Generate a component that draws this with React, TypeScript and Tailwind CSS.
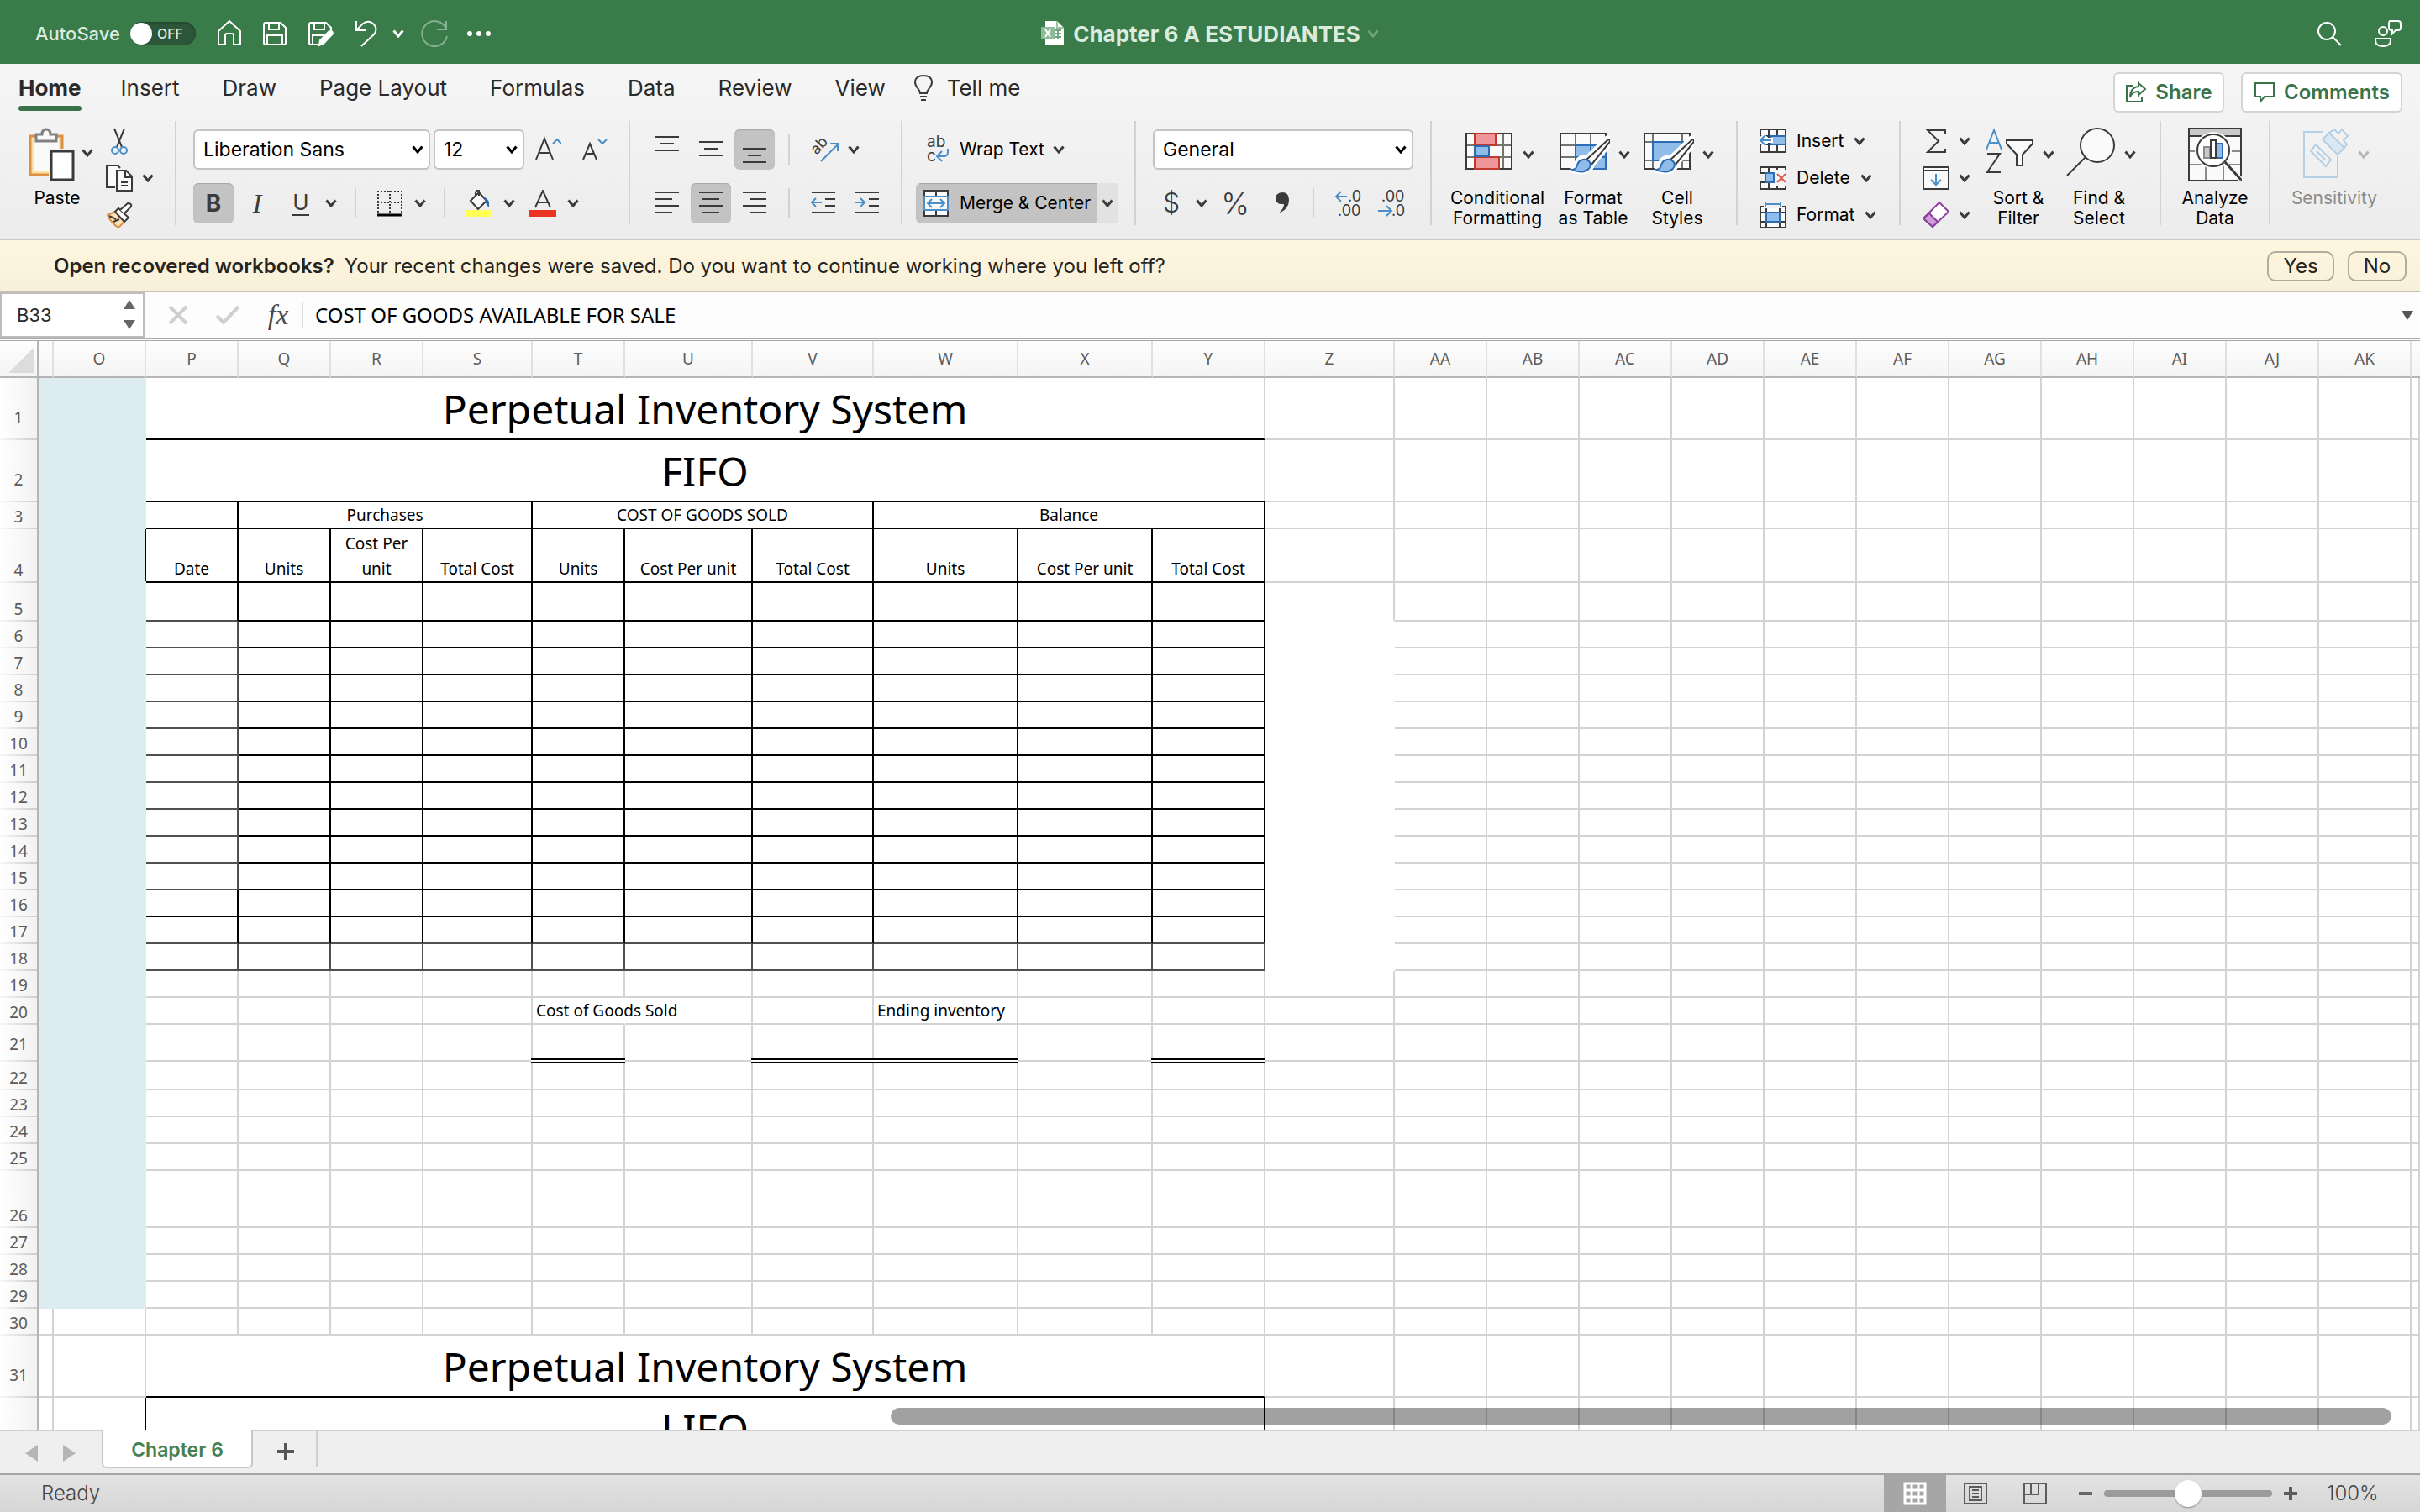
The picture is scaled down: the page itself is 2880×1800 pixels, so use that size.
import type { ReactNode } from 'react';
import clsx from 'clsx';

const ink = '#3b3b3b';
const blue = '#4a8fc9';

type IconProps = {
  children: ReactNode;
  w?: number;
  h?: number;
  className?: string;
};

function Icon({ children, w = 32, h = 32, className }: IconProps) {
  return (
    <svg
      width={w}
      height={h}
      viewBox={`0 0 ${w} ${h}`}
      fill="none"
      stroke={ink}
      strokeWidth={2}
      className={clsx('shrink-0', className)}
      aria-hidden="true"
    >
      {children}
    </svg>
  );
}

function Chevron({ className }: { className?: string }) {
  return (
    <svg width="14" height="10" viewBox="0 0 14 10" fill="none" stroke="currentColor" strokeWidth="3" className={clsx('shrink-0', className)} aria-hidden="true">
      <path d="M1.500 1.500 7 8l5.500-6.500" />
    </svg>
  );
}

function Caret({ label, className }: { label: string; className?: string }) {
  return (
    <button aria-label={label} className={clsx('flex h-12 w-6 shrink-0 items-center justify-center text-[#3b3b3b]', className)}>
      <Chevron />
    </button>
  );
}

function Tool({ label, children, active, className }: { label: string; children: ReactNode; active?: boolean; className?: string }) {
  return (
    <button
      aria-label={label}
      className={clsx(
        'flex h-12 shrink-0 items-center justify-center rounded-md text-[#3b3b3b]',
        active && 'bg-[#c3c3c3] shadow-[inset_0_1px_1px_#a8a8a8]',
        className,
      )}
    >
      {children}
    </button>
  );
}

function Split() {
  return <span className="ml-4 h-9 w-0.5 shrink-0 bg-[#d2d2d2]" />;
}

function Group({ children, className }: { children: ReactNode; className?: string }) {
  return <div className={clsx('flex h-[124px] shrink-0 border-r-2 border-[#d2d2d2]', className)}>{children}</div>;
}

function Combo({ label, value, className }: { label: string; value: string; className?: string }) {
  return (
    <label className={clsx('relative flex h-12 shrink-0 items-center', className)}>
      <select aria-label={label} className="h-full w-full appearance-none rounded-md border-2 border-[#c4c4c4] bg-white pl-2.5 text-[23px] text-black">
        <option>{value}</option>
      </select>
      <Chevron className="pointer-events-none absolute right-2" />
    </label>
  );
}

function BigTool({ icon, lines, caret = true, disabled, className }: { icon: ReactNode; lines: string[]; caret?: boolean; disabled?: boolean; className?: string }) {
  return (
    <button
      disabled={disabled}
      className={clsx('flex shrink-0 flex-col items-center pt-2 text-[21px] leading-6 whitespace-nowrap', disabled ? 'text-[#8c8c8c]' : 'text-black', className)}
    >
      <span className={clsx('mb-2 flex h-16 items-center gap-2.5', caret && 'pl-1')}>
        {icon}
        {caret && <Chevron className={disabled ? 'text-[#b5b5b5]' : 'text-[#3b3b3b]'} />}
      </span>
      {lines.map((line) => (
        <span key={line}>{line}</span>
      ))}
    </button>
  );
}

// strokes of a paragraph, each one given as [x, width]
function Lines({ rows, top, step }: { rows: number[][]; top: number; step: number }) {
  return (
    <Icon w={28}>
      {rows.map(([x, width], i) => (
        <path key={i} d={`M${x} ${top + i * step}h${width}`} />
      ))}
    </Icon>
  );
}

function Brush() {
  return (
    <>
      <path d="M57 13c4-1 5 2 3 5L39 43l-7-6z" fill="#fafafa" stroke="#fff" strokeWidth="7" />
      <path d="M14 50c6 0 5-4 7-9s10-8 15-3 2 11-3 13-13 2-19-1z" fill="#8fbce8" stroke="#fff" strokeWidth="6" />
      <path d="M57 15c3-2 4 0 2 3L38 44l-6-6z" fill="#fafafa" />
      <path d="M15 50c6-1 5-4 7-8s9-6 13-2 1 9-3 11-12 2-17-1z" fill="#8fbce8" stroke="#2b6cb5" />
    </>
  );
}

function TitleBar() {
  return (
    <header className="flex h-[76px] shrink-0 items-center bg-[#397b49] pt-1 text-white">
      <div className="flex flex-1 items-center">
        <label className="ml-[42px] flex items-center gap-3 text-[22px] font-medium text-[#dcebdf]">
          AutoSave
          <input type="checkbox" className="sr-only" />
          <span className="flex h-7 w-[78px] items-center rounded-full bg-[#2d553a] text-base shadow-[inset_0_1px_3px_#1f3f29]">
            <span className="h-[26px] w-[26px] rounded-full bg-white" />
            <span className="ml-1.5">OFF</span>
          </span>
        </label>
        <button aria-label="Home" className="ml-6">
          <Icon className="stroke-white"><path d="M3 13 16 1l13 12v16h-8V18a2 2 0 0 0-2-2h-6a2 2 0 0 0-2 2v11H3z" strokeLinejoin="round" /></Icon>
        </button>
        <button aria-label="Save" className="ml-[22px]">
          <Icon className="stroke-white"><path d="M3 5q0-2 2-2h18l6 6v18q0 2-2 2H5q-2 0-2-2zM9 3v8h12V3M7 29V18h18v11" /></Icon>
        </button>
        <button aria-label="Save as" className="ml-[22px]">
          <Icon className="stroke-white">
            <path d="M13 29H5q-2 0-2-2V5q0-2 2-2h18l6 6v3M9 3v8h12V3M7 29V18h13" />
            <path d="m15 30 1-6 11-11q4-1 4 3L20 28z" fill="#fff" />
          </Icon>
        </button>
        <button aria-label="Undo" className="ml-6">
          <Icon w={30} className="stroke-white"><path d="M3 1v11h11M3 12 11 4q7-5 13 1 5 6 0 12L9 31" /></Icon>
        </button>
        <button aria-label="Undo list" className="ml-4 text-white"><Chevron /></button>
        <button aria-label="Redo" className="ml-[18px]">
          <Icon w={36} className="stroke-[#88b092]"><path d="M21 11h11V1M32 10A15 15 0 1 0 33 19" /></Icon>
        </button>
        <button aria-label="More" className="ml-5">
          <Icon w={30}><g fill="#fff" stroke="none"><circle cx="4" cy="16" r="3" /><circle cx="15" cy="16" r="3" /><circle cx="26" cy="16" r="3" /></g></Icon>
        </button>
      </div>
      <button className="flex items-center text-[26px] font-bold text-[#dcebdf]">
        <Icon w={28} className="mr-2.5">
          <path d="M5 1h14l8 8v21H5z" fill="#fff" stroke="none" />
          <path d="M19 1v8h8" stroke="#9cc3a6" />
          <path d="M17 12h7M17 16h7M17 20h7M20 11v11" stroke="#6fa47d" />
          <rect x="0" y="8" width="16" height="15" rx="1" fill="#8fbb9a" stroke="none" />
          <path d="m5 11 6 9M11 11l-6 9" stroke="#fff" />
        </Icon>
        Chapter 6 A ESTUDIANTES
        <Chevron className="ml-2 text-[#6fa47d]" />
      </button>
      <div className="flex flex-1 items-center justify-end gap-9">
        <button aria-label="Search">
          <Icon className="stroke-white"><circle cx="13" cy="13" r="10" /><path d="m20 20 10 10" /></Icon>
        </button>
        <button aria-label="Presence" className="mr-5">
          <Icon w={36} h={34} className="stroke-white">
            <circle cx="12" cy="14" r="5" />
            <path d="M3 23h18v2q0 7-9 7t-9-7zM20 2h10q3 0 3 3v5q0 3-3 3h-3l-4 4v-4h-1q-3 0-3-3V5q0-2 1-3z" />
          </Icon>
        </button>
      </div>
    </header>
  );
}

const tabs = ['Insert', 'Draw', 'Page Layout', 'Formulas', 'Data', 'Review', 'View'];

function Tabs() {
  return (
    <nav className="flex h-[60px] items-start pt-3 pl-[22px] text-[26px] leading-[34px] text-[#2a2a2a]">
      <button className="mr-[47px] font-bold">
        Home
        <span className="mt-1 block h-1.5 rounded-full bg-[#3a7349]" />
      </button>
      {tabs.map((tab) => (
        <button key={tab} className="mr-[51px]">{tab}</button>
      ))}
      <button className="flex items-center">
        <Icon w={24} h={34} className="-ml-[18px] mr-4">
          <path d="M8 23c0-5-6-7-6-13C2 5 6 2 12 2s10 3 10 8c0 6-6 8-6 13zM8 27h8M9 31h6" />
        </Icon>
        Tell me
      </button>
      <div className="-mt-0.5 ml-auto flex gap-5 pr-[21px] text-2xl font-semibold text-[#3a7349]">
        <button className="flex h-12 w-[132px] items-center justify-center gap-2.5 rounded-md border-2 border-[#d4d4d4] bg-white">
          <Icon w={26} h={26} className="stroke-[#3a7349]"><path d="M9 5H2v19h18v-6M16 2l8 7-8 7v-4q-8 0-10 7 0-12 10-13z" /></Icon>
          Share
        </button>
        <button className="flex h-12 w-[192px] items-center justify-center gap-2.5 rounded-md border-2 border-[#d4d4d4] bg-white">
          <Icon w={26} h={26} className="stroke-[#3a7349]"><path d="M2 2h22v16H13l-5 6v-6H2z" /></Icon>
          Comments
        </button>
      </div>
    </nav>
  );
}

function Ribbon() {
  return (
    <div className="flex h-[148px] pt-2">
      <Group className="w-[210px] pl-[34px]">
        <button className="flex w-[68px] shrink-0 flex-col items-start pt-2 text-[21px] leading-6 text-black">
          <Icon w={58} h={64} className="mb-2">
            <path d="M2 10h38v46H2z" fill="#fbe0a0" stroke="#dd8f45" strokeWidth="3" />
            <path d="M6 14h30v37H6z" fill="#fafafa" stroke="none" />
            <path d="M9 16V8h7q0-6 5-6t5 6h7v8z" fill="#fafafa" stroke="#808080" strokeWidth="3" />
            <path d="M24 25h32v39H24z" fill="#f3f3f3" stroke="none" />
            <path d="M27 28h26v34H27z" fill="#fff" strokeWidth="3" />
          </Icon>
          <span className="self-center">Paste</span>
        </button>
        <Caret label="Paste options" className="-ml-2.5 mt-[14px]" />
        <div className="ml-2.5 flex flex-col pt-0.5">
          <button aria-label="Cut" className="flex h-11 shrink-0 items-center">
            <Icon><path d="M10 1l9 22M22 1l-9 22" /><circle cx="11" cy="27" r="4" stroke={blue} /><circle cx="21" cy="27" r="4" stroke={blue} /></Icon>
          </button>
          <div className="flex h-11 shrink-0 items-center">
            <button aria-label="Copy">
              <Icon><path d="M11 27H1V1h13l3 3M13 7h11l7 7v17H13z" fill="#fafafa" /><path d="M23 7v8h8M18 21h8M18 25h8" /></Icon>
            </button>
            <Caret label="Copy options" className="ml-1.5" />
          </div>
          <button aria-label="Format painter" className="flex h-11 shrink-0 items-center">
            <Icon>
              <path d="m2 16 9-4 11 12-7 7q-9-6-13-15z" fill="#fde3b4" stroke="#dd8f45" />
              <path d="m11 12 4-4 12 11-5 5z" fill="#fff" />
              <path d="m17 10 9-8q5 0 4 4l-8 8M4 17l8 4M9 24l7-3" fill="#fff" />
            </Icon>
          </button>
        </div>
      </Group>

      <Group className="w-[540px] flex-col gap-4 pt-2.5 pl-5">
        <div className="flex items-center">
          <Combo label="Font" value="Liberation Sans" className="w-[282px]" />
          <Combo label="Font size" value="12" className="ml-1 w-[108px]" />
          <Tool label="Grow font" className="ml-3 w-8"><Icon><path d="M2 28 12 3l10 25M6 20h12" /><path d="m22 9 5-5 5 5" stroke={blue} /></Icon></Tool>
          <Tool label="Shrink font" className="ml-6 w-8"><Icon><path d="M2 28 10 9l8 19M5 21h10" /><path d="m20 4 5 5 5-5" stroke={blue} /></Icon></Tool>
        </div>
        <div className="flex items-center">
          <Tool label="Bold" active className="w-12 text-[28px] font-bold">B</Tool>
          <Tool label="Italic" className="ml-1 w-12 font-['Liberation_Serif',serif] text-[32px] italic">I</Tool>
          <Tool label="Underline" className="ml-1 w-12 text-[26px]"><span className="border-b-2 border-[#3b3b3b] leading-7">U</span></Tool>
          <Caret label="Underline styles" />
          <Split />
          <Tool label="Borders" className="ml-6 w-8">
            <Icon><path d="M2 1v28M30 1v28M1 2h30M1 15h30M16 1v28" strokeDasharray="2 2" /><path d="M1 30h30" strokeWidth="3" stroke="#000" /></Icon>
          </Tool>
          <Caret label="Border styles" className="ml-2" />
          <Split />
          <Tool label="Fill color" className="ml-6 w-8">
            <Icon><path d="M6 13 16 3l9 10-10 10zM12 8V3q1-3 4-2v6" fill="#fafafa" /><path d="M22 9q7 1 6 12-5-5-5-9z" fill="#2b6cb5" stroke="none" /><path d="M0 28h32" strokeWidth="8" stroke="#ffff54" /></Icon>
          </Tool>
          <Caret label="Fill colors" className="ml-2" />
          <Tool label="Font color" className="ml-3 w-8">
            <Icon><path d="m7 21 9-20 9 20M10 15h12" /><path d="M0 28h32" strokeWidth="8" stroke="#ea3323" /></Icon>
          </Tool>
          <Caret label="Font colors" className="ml-2" />
        </div>
      </Group>

      <Group className="w-[324px] flex-col gap-4 pt-2.5 pl-5">
        <div className="flex items-center">
          <Tool label="Align top" className="w-12"><Lines rows={[[0, 28], [6, 16], [0, 28]]} top={1} step={8} /></Tool>
          <Tool label="Align middle" className="ml-1 w-12"><Lines rows={[[0, 28], [6, 16], [0, 28]]} top={7} step={8} /></Tool>
          <Tool label="Align bottom" active className="ml-1 w-12"><Lines rows={[[0, 28], [6, 16], [0, 28]]} top={15} step={8} /></Tool>
          <Split />
          <Tool label="Orientation" className="ml-6 w-9">
            <Icon w={36} h={40}>
              <text x="8" y="27" transform="rotate(-48 8 27)" fontSize="18" fill={ink} stroke="none">ab</text>
              <path d="m13 34 20-20M24 13h9v9" stroke={blue} />
            </Icon>
          </Tool>
          <Caret label="Orientation options" className="ml-1" />
        </div>
        <div className="flex items-center">
          <Tool label="Align left" className="w-12"><Lines rows={[[0, 28], [0, 20], [0, 28], [0, 20]]} top={3} step={8} /></Tool>
          <Tool label="Align center" active className="ml-1 w-12"><Lines rows={[[0, 28], [4, 20], [0, 28], [4, 20]]} top={3} step={8} /></Tool>
          <Tool label="Align right" className="ml-1 w-12"><Lines rows={[[0, 28], [8, 20], [0, 28], [8, 20]]} top={3} step={8} /></Tool>
          <Split />
          <Tool label="Decrease indent" className="ml-6 w-8"><Icon><path d="M2 3h28M18 11h12M18 19h12M2 27h28" /><path d="M14 15H2M7 10l-5 5 5 5" stroke={blue} /></Icon></Tool>
          <Tool label="Increase indent" className="ml-5 w-8"><Icon><path d="M2 3h28M18 11h12M18 19h12M2 27h28" /><path d="M1 15h12M8 10l5 5-5 5" stroke={blue} /></Icon></Tool>
        </div>
      </Group>

      <Group className="w-[278px] flex-col gap-4 pt-2.5 pl-4 text-[21px] text-black">
        <button className="flex h-12 items-center pl-2">
          <Icon h={44}>
            <g fill={ink} stroke="none" fontSize="19"><text x="5" y="19">ab</text><text x="5" y="36">c</text></g>
            <path d="M30 21v4q0 5-5 5h-8M23 24l-6 6 6 6" stroke={blue} />
          </Icon>
          <span className="ml-3">Wrap Text</span>
          <Chevron className="ml-2.5 text-[#3b3b3b]" />
        </button>
        <div className="flex h-12 overflow-hidden rounded-md">
          <button className="flex w-[216px] items-center bg-[#c3c3c3] pl-2 whitespace-nowrap shadow-[inset_0_1px_1px_#a8a8a8]">
            <Icon>
              <path d="M2 1h28v30H2zM16 1v30" fill="#fafafa" />
              <path d="M2 8h28v16H2z" fill="#fafafa" stroke={blue} />
              <path d="M6 16h20M11 11l-5 5 5 5M21 11l5 5-5 5" stroke={blue} />
            </Icon>
            <span className="ml-3">Merge &amp; Center</span>
          </button>
          <Caret label="Merge options" className="bg-[#e2e2e2]" />
        </div>
      </Group>

      <Group className="w-[352px] flex-col gap-4 pt-2.5 pl-5">
        <Combo label="Number format" value="General" className="w-[310px]" />
        <div className="flex items-center">
          <Tool label="Currency" className="w-11 text-[32px] font-light">$</Tool>
          <Caret label="Currency list" className="ml-0.5" />
          <Tool label="Percent" className="ml-2 w-10 text-[36px] font-light">%</Tool>
          <Tool label="Comma" className="ml-4 w-10">
            <Icon><path d="M16 3q8 0 8 9 0 11-12 16 6-6 6-11-10 1-10-7 0-6 8-7z" fill={ink} stroke="none" /></Icon>
          </Tool>
          <Split />
          <Tool label="Increase decimal" className="ml-6 w-9">
            <Icon w={36} h={44}><g fill={ink} stroke="none" fontSize="18"><text x="16" y="20">.0</text><text x="4" y="37">.00</text></g><path d="M15 14H2M8 8l-6 6 6 6" stroke={blue} /></Icon>
          </Tool>
          <Tool label="Decrease decimal" className="ml-4 w-9">
            <Icon w={36} h={44}><g fill={ink} stroke="none" fontSize="18"><text x="4" y="20">.00</text><text x="16" y="37">.0</text></g><path d="M0 31h15M10 25l6 6-6 6" stroke={blue} /></Icon>
          </Tool>
        </div>
      </Group>

      <Group className="w-[364px] pl-5">
        <BigTool
          className="w-[116px]"
          lines={['Conditional', 'Formatting']}
          icon={
            <Icon w={60} h={64}>
              <path d="M3 7h54v42H3z" fill="#fafafa" />
              <path d="M4 21h52M4 35h52M47 8v40M13 8v40" stroke="#757570" />
              <path d="M13 7h25v14H13zM13 35h29v14H13z" fill="#f0969a" stroke="#c0392b" />
              <path d="M13 22h17v12H13z" fill="#8fbce8" stroke="#2b6cb5" />
            </Icon>
          }
        />
        <BigTool
          className="ml-2 w-24"
          lines={['Format', 'as Table']}
          icon={
            <Icon w={60} h={64}>
              <path d="M1 7h54v42H1z" fill="#fafafa" />
              <path d="M2 21h52M2 35h17M19 8v40M37 8v14" stroke="#757570" />
              <path d="M19 21h36v28H19zM37 21v28M19 35h36" fill="#8fbce8" stroke="#2b6cb5" />
              <Brush />
            </Icon>
          }
        />
        <BigTool
          className="ml-1 w-24"
          lines={['Cell', 'Styles']}
          icon={
            <Icon w={60} h={64}>
              <path d="M1 7h54v42H1z" fill="#fafafa" />
              <path d="M2 17h52M2 39h52M11 8v40M46 8v40" stroke="#757570" />
              <path d="M11 17h35v22H11z" fill="#8fbce8" stroke="#2b6cb5" />
              <Brush />
            </Icon>
          }
        />
      </Group>

      <Group className="w-[194px] flex-col pt-0.5 pl-[26px] text-[21px] text-black">
        <button className="flex h-11 shrink-0 items-center gap-3">
          <Icon><path d="M1 2h30v27H1zM11 2v27M21 2v27M1 10h30M1 20h30" fill="#fafafa" /><path d="M13 10h18v10H13z" fill="#8fbce8" stroke="#2b6cb5" /><path d="M1 15h15M7 9l-6 6 6 6" stroke="#fff" strokeWidth="6" /><path d="M1 15h13M7 9l-6 6 6 6" stroke={blue} /></Icon>
          <span>Insert</span>
          <Chevron className="text-[#3b3b3b]" />
        </button>
        <button className="flex h-11 shrink-0 items-center gap-3">
          <Icon><path d="M1 10V3h30v7zM1 21h30v8H1zM11 3v7M21 3v7M11 21v8M21 21v8" fill="#fafafa" /><path d="M7 10h10v11H7z" fill="#8fbce8" stroke="#2b6cb5" /><path d="M18 6h14v20H18z" fill="#f5f5f5" stroke="none" /><path d="m21 11 10 10M31 11 21 21" stroke="#dc5a50" /></Icon>
          <span>Delete</span>
          <Chevron className="text-[#3b3b3b]" />
        </button>
        <button className="flex h-11 shrink-0 items-center gap-3">
          <Icon><path d="M1 6h30v25H1zM8 6v25M24 6v25M1 13h30M1 24h30" fill="#fafafa" /><path d="M5 0h22v8H5z" fill="#f2f2f2" stroke="none" /><path d="M8 13h16v11H8z" fill="#8fbce8" stroke="#2b6cb5" /><path d="M7 3h18M7 0v6M25 0v6" stroke={blue} /></Icon>
          <span>Format</span>
          <Chevron className="text-[#3b3b3b]" />
        </button>
      </Group>

      <Group className="w-[310px] pl-[26px]">
        <div className="flex w-[66px] flex-col pt-0.5">
          <div className="flex h-11 shrink-0 items-center">
            <button aria-label="AutoSum"><Icon><path d="M27 7V3H6l13 13L6 29h21v-4" /></Icon></button>
            <Caret label="AutoSum options" className="ml-1.5" />
          </div>
          <div className="flex h-11 shrink-0 items-center">
            <button aria-label="Fill"><Icon><path d="M1 3h30v26H1z" fill="#fafafa" /><path d="M1 7h30" /><path d="M16 11v13M10 18l6 6 6-6" stroke={blue} /></Icon></button>
            <Caret label="Fill options" className="ml-1.5" />
          </div>
          <div className="flex h-11 shrink-0 items-center">
            <button aria-label="Clear"><Icon><path d="M20 1 31 12 12 30 1 20z" fill="#fff" stroke="#8d3f9b" /><path d="m8 14 10 10-6 6L1 20z" fill="#cf9bd9" stroke="#8d3f9b" /></Icon></button>
            <Caret label="Clear options" className="ml-1.5" />
          </div>
        </div>
        <BigTool
          className="w-24"
          lines={['Sort &', 'Filter']}
          icon={
            <Icon w={58} h={64}>
              <path d="M1 26 10 3l9 23M5 18h10" stroke={blue} />
              <path d="M2 31h15L2 53h16" />
              <path d="M25 15h31v4L44 32v13h-7V32L25 19z" fill="#fafafa" />
            </Icon>
          }
        />
        <BigTool
          className="w-24"
          lines={['Find &', 'Select']}
          icon={<Icon w={60} h={64}><circle cx="38" cy="21" r="20" fill="#fafafa" /><path d="M24 35 2 57" /></Icon>}
        />
      </Group>

      <Group className="w-[130px]">
        <BigTool
          className="w-full"
          caret={false}
          lines={['Analyze', 'Data']}
          icon={
            <Icon w={66} h={64}>
              <path d="M2 1h62v62H2z" fill="#fafafa" />
              <path d="M3 2h60v8H3z" fill="#c9c9c7" stroke="none" />
              <path d="M2 10h62" />
              <path d="M3 28h60M3 44h60M22 44v18M43 44v18" stroke="#8a8a86" />
              <circle cx="31" cy="27" r="22" fill="#fafafa" stroke="none" />
              <path d="m44 42 20 20" stroke="#fafafa" strokeWidth="6" />
              <circle cx="31" cy="27" r="19" fill="#fff" />
              <path d="m45 41 19 21" strokeWidth="3" />
              <path d="M20 23h7v13h-7z" fill="#c9c9c7" stroke="#8a8a86" />
              <path d="M35 19h7v17h-7z" fill="#8fbce8" stroke="#2b6cb5" />
              <path d="M28 15h6v21h-6z" fill="#fff" />
            </Icon>
          }
        />
      </Group>

      <BigTool
        className="ml-5 w-28"
        disabled
        lines={['Sensitivity']}
        icon={
          <Icon w={56} h={64} className="stroke-[#b5cfe4]">
            <path d="M24 5H2v54h40V34" />
            <path d="m16 20 18 18-6 8L10 28zM17 28l10 10" />
            <path d="m24 14 8-8 18 18-8 8z" fill="#dbe8f3" />
            <path d="m32 6 6-4 5 5 4-5 7 8-5 5 4 5-4 5" />
          </Icon>
        }
      />
    </div>
  );
}

function MessageBar() {
  return (
    <div className="flex h-[62px] shrink-0 items-center border-b-2 border-[#c8c0b0] bg-linear-to-b from-[#fff6df] to-[#f9f0da] pt-0.5 pr-4 pl-16 text-2xl text-[#262420]">
      <strong className="font-semibold">Open recovered workbooks?</strong>
      <span className="ml-3">Your recent changes were saved. Do you want to continue working where you left off?</span>
      <button className="ml-auto h-9 w-20 rounded-[10px] border-2 border-[#b3ab9c]">Yes</button>
      <button className="ml-4 h-9 w-[70px] rounded-[10px] border-2 border-[#b3ab9c]">No</button>
    </div>
  );
}

function FormulaBar() {
  return (
    <div className="flex h-[58px] shrink-0 items-center border-b-4 border-double border-[#a9a9a9] bg-[#fdfdfd]">
      <div className="flex h-full w-[172px] shrink-0 items-center border-2 border-[#bdbdbd] bg-white pr-2">
        <input aria-label="Name box" defaultValue="B33" className="w-0 flex-1 pl-[18px] text-[22px] text-[#2a2a2a] outline-none" />
        <Icon w={16} h={36}><path d="M1 11 8 0l7 11zM1 24l7 11 7-11z" fill="#666" stroke="none" /></Icon>
      </div>
      <button aria-label="Cancel" className="ml-7">
        <Icon w={24} h={24} className="stroke-[#cfcfcf]"><path d="m2 2 20 20M22 2 2 22" strokeWidth="4" /></Icon>
      </button>
      <button aria-label="Enter" className="ml-8">
        <Icon w={30} h={24} className="stroke-[#cfcfcf]"><path d="m2 13 8 8L28 2" strokeWidth="4" /></Icon>
      </button>
      <button aria-label="Insert function" className="ml-7 w-[34px] font-['Liberation_Serif',serif] text-[34px] leading-8 text-[#4a4a4a] italic">fx</button>
      <span className="ml-[11px] h-[30px] w-0.5 shrink-0 bg-[#dcdcdc]" />
      <input
        aria-label="Formula"
        defaultValue="COST OF GOODS AVAILABLE FOR SALE"
        className="ml-[14px] flex-1 bg-transparent font-['Noto_Sans',sans-serif] text-2xl text-black outline-none"
      />
      <button aria-label="Expand formula bar" className="mr-2">
        <Icon w={14} h={12}><path d="M0 1h14L7 12z" fill="#555" stroke="none" /></Icon>
      </button>
    </div>
  );
}

const columns = [
  'w-[18px]', 'w-[110px]', 'w-[110px]', 'w-[110px]', 'w-[110px]', 'w-[130px]', 'w-[110px]', 'w-[152px]', 'w-[144px]', 'w-[172px]',
  'w-[160px]', 'w-[134px]', 'w-[154px]', 'w-[110px]', 'w-[110px]', 'w-[110px]', 'w-[110px]', 'w-[110px]', 'w-[110px]', 'w-[110px]',
  'w-[110px]', 'w-[110px]', 'w-[110px]', 'w-[110px]',
];
const ledger = ['P', 'Q', 'R', 'S', 'T', 'U', 'V', 'W', 'X', 'Y'];
const blank = ['AA', 'AB', 'AC', 'AD', 'AE', 'AF', 'AG', 'AH', 'AI', 'AJ', 'AK'];
const letters = ['O', ...ledger, 'Z', ...blank];

const heights: Record<number, string> = {
  1: 'h-[74px]', 2: 'h-[74px]', 4: 'h-16', 5: 'h-[46px]', 21: 'h-11', 22: 'h-[34px]', 26: 'h-[68px]', 31: 'h-[74px]', 32: 'h-[74px]',
};

const titles: Record<number, string> = {
  1: 'Perpetual Inventory System',
  2: 'FIFO',
  31: 'Perpetual Inventory System',
  32: 'LIFO',
};

const headings: Record<string, string> = {
  P: 'Date', Q: 'Units', R: 'Cost Per unit', S: 'Total Cost', T: 'Units',
  U: 'Cost Per unit', V: 'Total Cost', W: 'Units', X: 'Cost Per unit', Y: 'Total Cost',
};

const cell = 'relative border-r-2 border-b-2 p-0 align-bottom';
const grid = 'border-[#d3d3d3]';

function ledgerBorders(row: number, col: string) {
  if (row < 5) return 'border-black';
  if (row > 18) return grid;
  const right = row === 18 || (col === 'P' && row > 5 && row < 16) ? 'border-r-[#505050]' : 'border-r-black';
  const bottom = row > 16 || (col === 'P' && row < 16) ? 'border-b-[#505050]' : 'border-b-black';
  return `${right} ${bottom}`;
}

function LedgerCells({ row }: { row: number }) {
  if (titles[row]) {
    return (
      <td
        colSpan={10}
        className={clsx(cell, 'text-center text-5xl leading-[70px]', row === 32 ? 'border-black' : 'border-r-[#d3d3d3] border-b-black')}
      >
        {titles[row]}
        {row === 32 && <span className="absolute inset-y-0 -left-0.5 w-0.5 bg-black" />}
      </td>
    );
  }
  if (row === 3) {
    return (
      <>
        <td className={clsx(cell, 'border-black')} />
        <td colSpan={3} className={clsx(cell, 'border-black')}>Purchases</td>
        <td colSpan={3} className={clsx(cell, 'border-black')}>COST OF GOODS SOLD</td>
        <td colSpan={3} className={clsx(cell, 'border-black')}>Balance</td>
      </>
    );
  }
  return (
    <>
      {ledger.map((col) => (
        <td
          key={col}
          className={clsx(
            cell,
            ledgerBorders(row, col),
            row === 4 && col === 'R' && 'px-3',
            row === 20 && 'pl-1 text-left whitespace-nowrap',
            row === 20 && col === 'T' && 'border-r-transparent',
          )}
        >
          {row === 4 && headings[col]}
          {row === 4 && col === 'P' && <span className="absolute inset-y-0 -left-0.5 w-0.5 bg-black" />}
          {row === 20 && col === 'T' && 'Cost of Goods Sold'}
          {row === 20 && col === 'W' && 'Ending inventory'}
          {row === 21 && ['T', 'V', 'W', 'Y'].includes(col) && (
            <span className="absolute -inset-x-0.5 -bottom-1 z-10 h-1.5 border-y-2 border-black bg-white" />
          )}
        </td>
      ))}
    </>
  );
}

function SheetRow({ row }: { row: number }) {
  const side = row < 30 ? 'border-[#ddecf1] bg-[#ddecf1]' : grid;
  const tall = row === 1 || row === 2 || row === 31;
  let zBorder = grid;
  if (row === 5) zBorder = 'border-r-[#d3d3d3] border-b-transparent';
  if (row > 5 && row < 19) zBorder = 'border-transparent';

  return (
    <tr className={heights[row] ?? 'h-8'}>
      <th
        scope="row"
        className={clsx(
          'border-r-2 border-[#b5b5b5] bg-[linear-gradient(to_right,#f8f8f8,#d0cbcb),linear-gradient(to_right,#fff,#f2f2f2)] bg-[length:100%_2px,100%_100%] bg-[position:bottom,top] bg-no-repeat p-0 align-bottom font-normal text-[#5c5c5c]',
          tall && 'pb-3',
          row === 21 && 'pb-1.5',
        )}
      >
        {row < 32 && row}
      </th>
      <td className={clsx(cell, side)} />
      <td className={clsx(cell, side)} />
      <LedgerCells row={row} />
      <td className={clsx(cell, zBorder)} />
      {blank.map((col) => (
        <td key={col} className={clsx(cell, grid)} />
      ))}
      <td className={clsx(cell, grid)} />
    </tr>
  );
}

function Sheet() {
  const rows = Array.from({ length: 32 }, (_, i) => i + 1);

  return (
    <main className="relative min-h-0 flex-1 overflow-hidden bg-white">
      <table className="w-full table-fixed border-separate border-spacing-0 text-center font-['Noto_Sans',sans-serif] text-[19px] leading-[30px] text-black">
        <colgroup>
          <col className="w-[46px]" />
          {columns.map((width, i) => (
            <col key={i} className={width} />
          ))}
          <col />
        </colgroup>
        <thead>
          <tr className="h-11 bg-linear-to-b from-[#fdfdfd] to-[#f4f4f4] text-[#5c5c5c]">
            <td className="border-r-2 border-b-2 border-[#b5b5b5] p-0">
              <Icon w={44} h={42}><path d="M40 8v30H10z" fill="#dcdcdc" stroke="none" /></Icon>
            </td>
            <td className="border-r-2 border-b-2 border-r-[#e0e0e0] border-b-[#b5b5b5] p-0" />
            {letters.map((letter) => (
              <th key={letter} scope="col" className="border-r-2 border-b-2 border-r-[#e0e0e0] border-b-[#b5b5b5] p-0 font-normal">
                {letter}
              </th>
            ))}
            <td className="border-b-2 border-[#b5b5b5] p-0" />
          </tr>
        </thead>
        <tbody>
          {rows.map((row) => (
            <SheetRow key={row} row={row} />
          ))}
        </tbody>
      </table>
      <div className="absolute right-[34px] bottom-[6px] left-[1060px] z-20 h-5 rounded-full bg-black/37" />
    </main>
  );
}

function SheetTabs() {
  return (
    <div className="flex h-[52px] shrink-0 items-start border-t-2 border-[#cfcfcf] bg-[#efefef]">
      <button aria-label="Previous sheet" className="mt-4 ml-[30px]"><Icon w={15} h={20}><path d="M15 0v20L0 10z" fill="#b5b5b5" stroke="none" /></Icon></button>
      <button aria-label="Next sheet" className="mt-4 ml-[30px]"><Icon w={15} h={20}><path d="M0 0v20l15-10z" fill="#b5b5b5" stroke="none" /></Icon></button>
      <button className="-mt-0.5 ml-[31px] h-[46px] w-[180px] rounded-b-md border-2 border-t-0 border-[#c6c6c6] bg-white pt-1 text-[23px] font-semibold text-[#45804f]">Chapter 6</button>
      <button aria-label="Add sheet" className="mt-3.5 ml-[29px]"><Icon w={20} h={20} className="stroke-[#555]"><path d="M10 0v20M0 10h20" strokeWidth="4" /></Icon></button>
      <span className="ml-[26px] h-[42px] w-0.5 bg-[#cfcfcf]" />
    </div>
  );
}

function StatusBar() {
  return (
    <footer className="flex h-[46px] shrink-0 items-center border-t-2 border-[#a3a3a3] bg-linear-to-b from-[#e3e3e3] to-[#d6d6d6] pl-[49px] text-2xl font-light text-[#454545]">
      <span>Ready</span>
      <button aria-label="Normal view" className="ml-auto flex h-full w-[74px] items-center justify-center bg-[#a6a6a6]">
        <Icon w={28} h={28} className="stroke-white"><path d="M2 2h24v24H2zM10 2v24M18 2v24M2 10h24M2 18h24" strokeWidth="3" /></Icon>
      </button>
      <button aria-label="Page layout view" className="ml-5">
        <Icon w={30} h={28} className="stroke-[#5c5c5c]"><path d="M2 2h26v24H2zM8 6h14v16H8zM11 10h8M11 14h8M11 18h8" /></Icon>
      </button>
      <button aria-label="Page break view" className="ml-[42px]">
        <Icon w={28} h={28} className="stroke-[#5c5c5c]"><path d="M1 2h26v24H1zM1 15h17V2M9 2v13" /></Icon>
      </button>
      <button aria-label="Zoom out" className="ml-[38px] h-1 w-4 bg-[#666]" />
      <input
        type="range"
        aria-label="Zoom"
        min={0}
        max={200}
        defaultValue={100}
        className="ml-[14px] h-8 w-[200px] appearance-none bg-transparent [&::-webkit-slider-runnable-track]:h-2 [&::-webkit-slider-runnable-track]:rounded-full [&::-webkit-slider-runnable-track]:bg-[#9b9b9b] [&::-webkit-slider-thumb]:-mt-3 [&::-webkit-slider-thumb]:h-8 [&::-webkit-slider-thumb]:w-8 [&::-webkit-slider-thumb]:appearance-none [&::-webkit-slider-thumb]:rounded-full [&::-webkit-slider-thumb]:bg-white [&::-webkit-slider-thumb]:shadow-[0_1px_2px_#888]"
      />
      <button aria-label="Zoom in" className="ml-[14px]"><Icon w={16} h={16} className="stroke-[#5c5c5c]"><path d="M8 0v16M0 8h16" strokeWidth="4" /></Icon></button>
      <span className="w-[146px] pl-[35px]">100%</span>
    </footer>
  );
}

export default function App() {
  return (
    <div className="flex h-screen flex-col overflow-hidden bg-white font-[Inter,sans-serif]">
      <TitleBar />
      <div className="shrink-0 border-b-2 border-[#c9c7cb] bg-linear-to-b from-[#f6f6f6] to-[#ececec]">
        <Tabs />
        <Ribbon />
      </div>
      <MessageBar />
      <FormulaBar />
      <Sheet />
      <SheetTabs />
      <StatusBar />
    </div>
  );
}
